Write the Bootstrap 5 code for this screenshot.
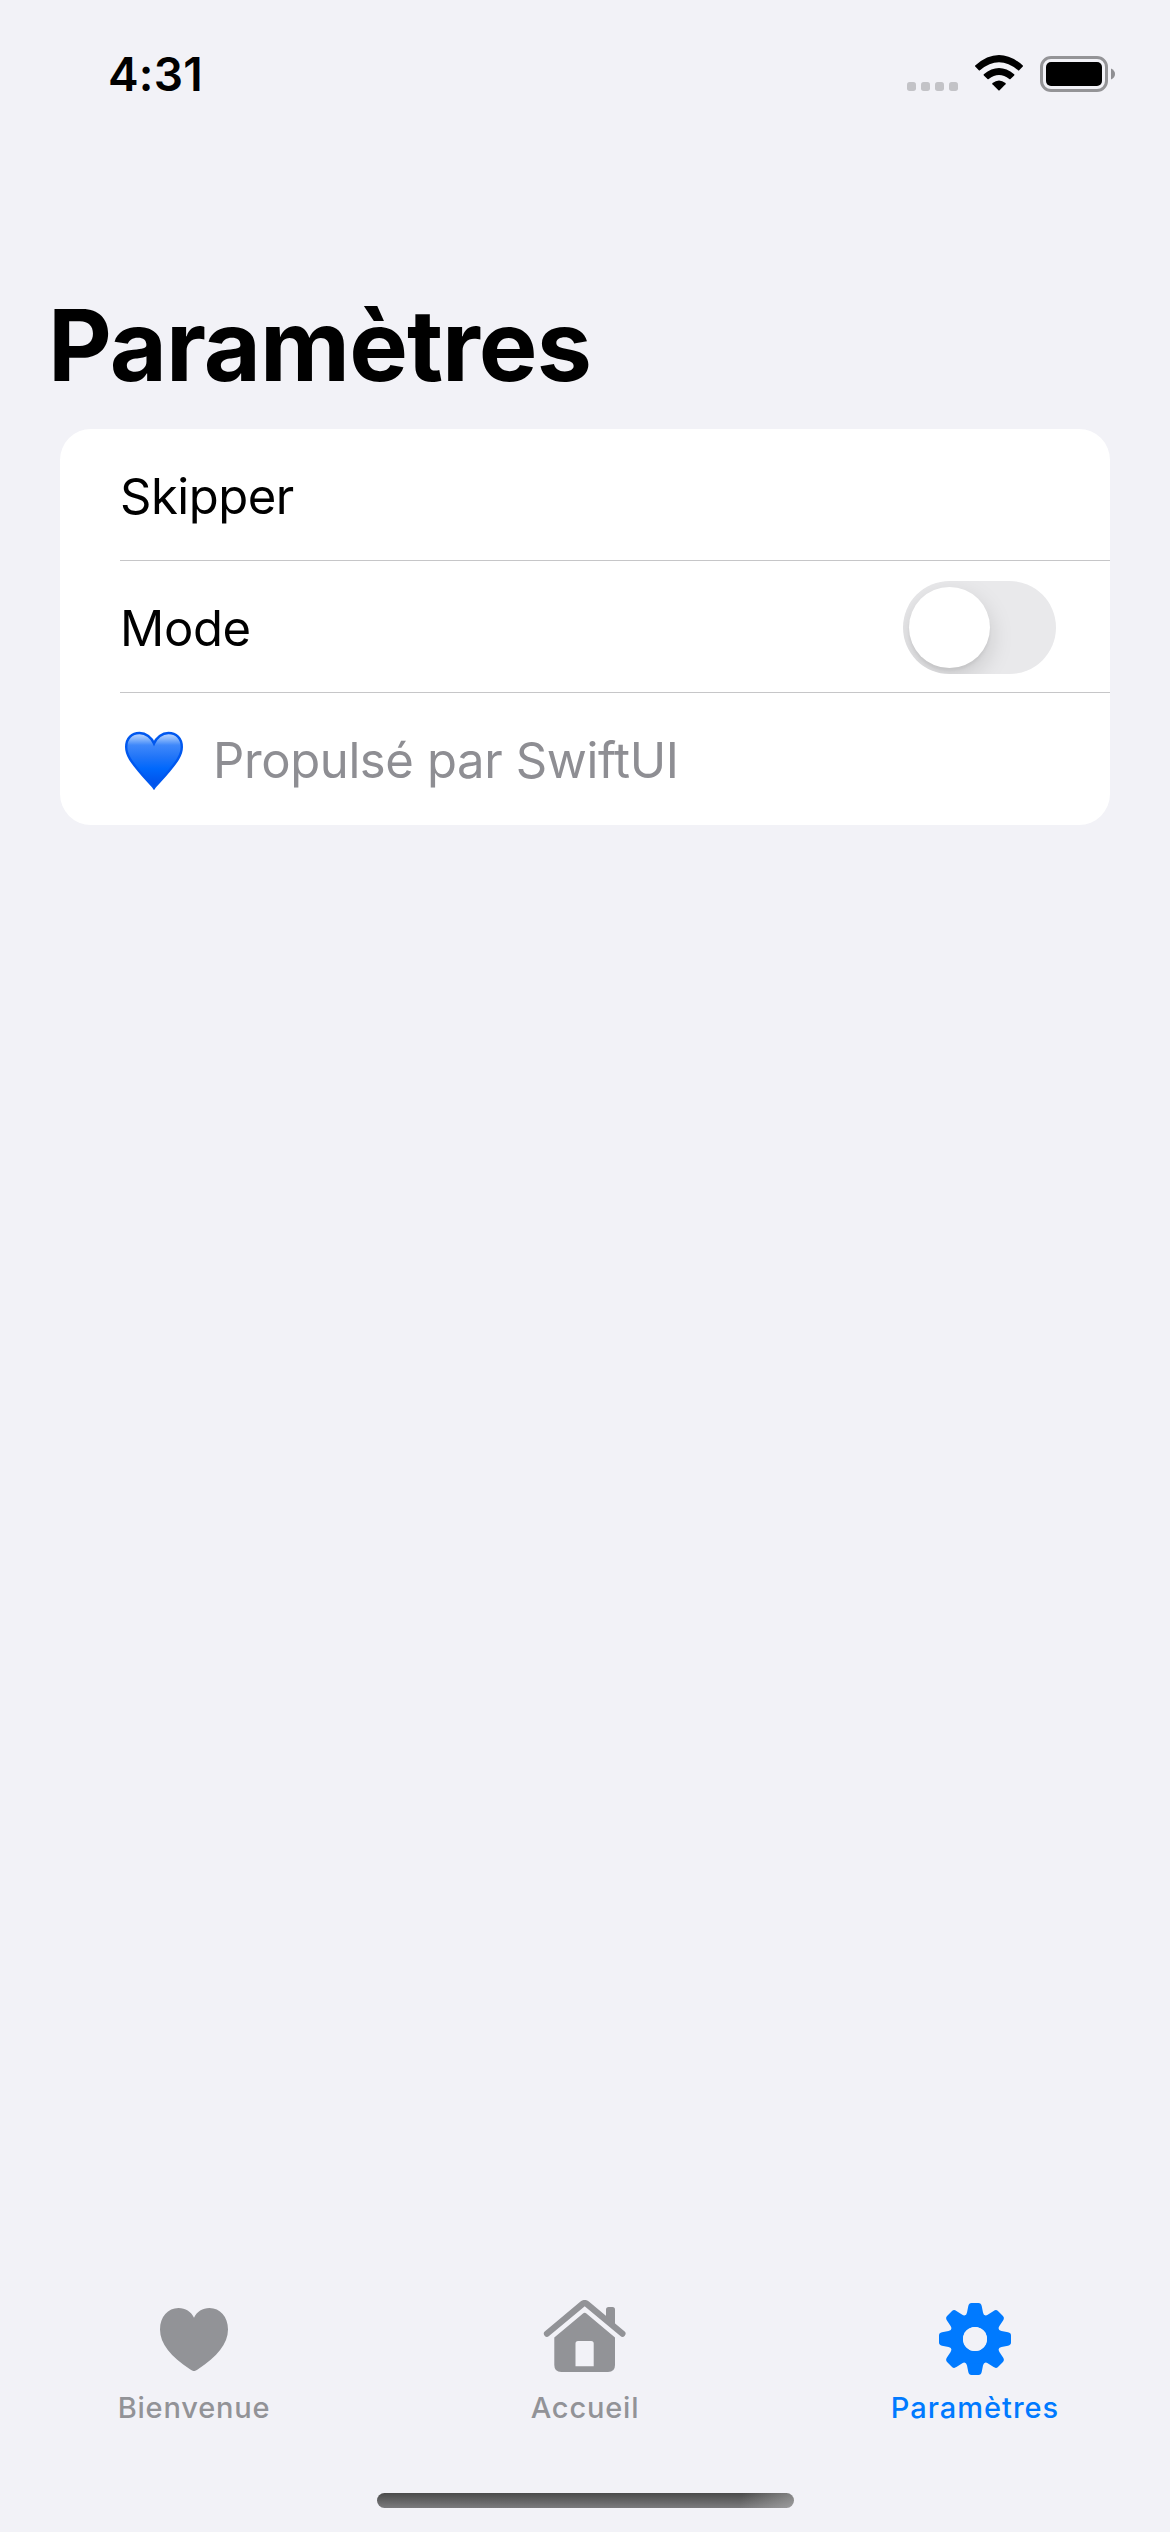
<!DOCTYPE html>
<html lang="fr">
<head>
<meta charset="utf-8">
<meta name="viewport" content="width=device-width, initial-scale=1">
<title>Paramètres</title>
<link href="https://cdn.jsdelivr.net/npm/bootstrap@5.3.0/dist/css/bootstrap.min.css" rel="stylesheet">
<style>
  body { background: #f2f2f7; color: #000; font-family: Inter, "Liberation Sans", sans-serif; }
  svg { display: block; flex: none; }
  .app-screen { height: 2532px; overflow: hidden; }
  .status-bar { height: 148px; padding: 0 54px 0 108px; }
  .status-time { font-size: 46px; font-weight: 600; line-height: 56px; letter-spacing: .2px; }
  .page-title { margin: 137px 0 24px 48px; font-size: 98.6px; font-weight: 700; line-height: 120px; letter-spacing: -.95px; }
  .settings-list { --bs-list-group-border-color: transparent; --bs-list-group-border-width: 0; --bs-list-group-color: #000; margin: 0 60px; border-radius: 31px; background: #fff; overflow: hidden; font-size: 49px; line-height: 60px; }
  .settings-row { height: 132px; margin-left: 60px; padding: 2px 54px 0 0; }
  .settings-row + .settings-row { box-shadow: 0 -1px 0 #c6c6c8; }
  .row-label { padding-top: 2px; letter-spacing: -.38px; }
  .row-label.tight-label { letter-spacing: -.5px; }
  .powered { color: #8e8e93; margin-left: 29px; }
  .mode-switch { width: 153px; height: 93px; margin-bottom: 1px; padding: 6px; border: 0; border-radius: 47px; background: #e9e9eb; overflow: hidden; }
  .switch-knob { display: block; width: 81px; height: 81px; border-radius: 50%; background: #fff; box-shadow: 0 9px 24px rgba(0,0,0,.15), 0 3px 3px rgba(0,0,0,.05); }
  .tab-bar { height: 193px; }
  .tab-link { padding: 0; color: #929397; font-size: 29px; font-weight: 500; line-height: 36px; letter-spacing: .8px; }
  .tab-link.active { color: #007aff; letter-spacing: 1px; }
  .tab-text { margin-top: 14px; }
  .tab-start { margin-left: -1px; margin-right: 1px; }
  .home-bar { width: 417px; height: 15px; margin-bottom: 24px; border-radius: 8px; background: linear-gradient(100deg, transparent 87%, rgba(190,190,190,.5) 100%), linear-gradient(#4b4b4b, #7b7b7d); }
</style>
</head>
<body>
<div class="app-screen d-flex flex-column">
  <header class="status-bar d-flex align-items-center justify-content-between">
    <span class="status-time">4:31</span>
    <svg width="209" height="38" viewBox="0 0 209 38" aria-hidden="true">
      <g fill="#c3c3c7">
        <rect x="0" y="27" width="9" height="9" rx="2.7"/><rect x="14" y="27" width="9" height="9" rx="2.7"/>
        <rect x="28" y="27" width="9" height="9" rx="2.7"/><rect x="42" y="27" width="9" height="9" rx="2.7"/>
      </g>
      <path d="M68.2 10.4Q92-10.4 115.8 10.4Q116.3 11 115.8 11.6L112.2 15.2Q111.6 15.7 111 15.2Q92-.7 73 15.2Q72.4 15.7 71.8 15.2L68.2 11.6Q67.7 11 68.2 10.4Z"/>
      <path d="M76.8 19.3Q92 6.6 107.2 19.3Q107.7 19.9 107.2 20.5L103.5 24.1Q102.9 24.6 102.3 24.1Q92 16 81.7 24.1Q81.1 24.6 80.5 24.1L76.8 20.5Q76.3 19.9 76.8 19.3Z"/>
      <path d="M85.5 28.1Q92 22.9 98.5 28.1Q99.1 28.7 98.5 29.3L92.6 35.2Q92 35.7 91.4 35.2L85.5 29.3Q84.9 28.7 85.5 28.1Z"/>
      <rect x="134.5" y="2.5" width="65" height="33" rx="9.5" fill="none" stroke="#949497" stroke-width="3"/>
      <rect x="139" y="7" width="56" height="24" rx="5"/>
      <path d="M204 13.500Q208 15.500 208 19T204 24.500Z" fill="#8f8f93"/>
    </svg>
  </header>

  <main class="flex-grow-1">
    <h1 class="page-title">Paramètres</h1>
    <div class="list-group settings-list">
      <div class="settings-row d-flex align-items-center"><span class="row-label tight-label">Skipper</span></div>
      <div class="settings-row d-flex align-items-center justify-content-between">
        <span class="row-label">Mode</span>
        <button class="mode-switch" type="button" role="switch" aria-checked="false" aria-label="Mode"><span class="switch-knob"></span></button>
      </div>
      <div class="settings-row d-flex align-items-center">
        <svg width="64" height="64" viewBox="0 0 64 64" aria-hidden="true">
          <defs>
            <linearGradient id="heartFill" x1="0" y1="0" x2="0" y2="1">
              <stop offset="0" stop-color="#c4dcff"/><stop offset=".1" stop-color="#8bb9fc"/><stop offset=".22" stop-color="#3f88fa"/><stop offset=".45" stop-color="#1f74f8"/><stop offset=".65" stop-color="#0068fc"/><stop offset="1" stop-color="#004ce6"/>
            </linearGradient>
          </defs>
          <path d="M34 60C32 57 26 51.500 19 43C11.500 34 6.200 27 6.200 19C6.200 10 12 5 19.500 5C26 5 31.500 9.500 34 15.500C36.500 9.500 42 5 48.500 5C56 5 61.800 10 61.800 19C61.800 27 56.500 34 49 43C42 51.500 36 57 34 60Z" fill="url(#heartFill)" stroke="#0058ef" stroke-width="2.400"/>
        </svg>
        <span class="row-label powered">Propulsé par SwiftUI</span>
      </div>
    </div>
  </main>

  <nav class="tab-bar nav nav-justified flex-nowrap align-items-start">
    <a class="nav-link tab-link d-flex flex-column align-items-center" href="#">
      <svg width="90" height="76" viewBox="0 0 90 76" fill="currentColor" aria-hidden="true">
        <path d="M44 71C43 71 41.500 70.200 40 69.200C21 57 10 43.500 10 29.500C10 16.500 18 8 28.500 8C35.500 8 41 11.500 44 17.700C47 11.500 52.500 8 59.500 8C70 8 78 16.500 78 29.500C78 43.500 67 57 48 69.200C46.500 70.200 45 71 44 71Z"/>
      </svg>
      <span class="tab-text tab-start">Bienvenue</span>
    </a>
    <a class="nav-link tab-link d-flex flex-column align-items-center" href="#">
      <svg width="90" height="76" viewBox="0 0 90 76" fill="currentColor" aria-hidden="true">
        <path d="M7 33.700L42.500 4Q44.700 2.200 46.900 4L82.400 33.700" fill="none" stroke="currentColor" stroke-width="6.200" stroke-linecap="round" stroke-linejoin="round"/>
        <path d="M66 17V9.500Q66 7 68.500 7H72.500Q75 7 75 9.500V25Z"/>
        <path fill-rule="evenodd" d="M14.300 37.500L43 13.500Q44.700 12.100 46.400 13.500L75 37.500V65Q75 72 68 72H21.300Q14.300 72 14.300 65ZM35.500 66.300H53.700V43.500Q53.700 41 51.200 41H38Q35.500 41 35.500 43.500Z"/>
      </svg>
      <span class="tab-text">Accueil</span>
    </a>
    <a class="nav-link tab-link active d-flex flex-column align-items-center" href="#" aria-current="page">
      <svg width="90" height="76" viewBox="-45 -39 90 76" fill="currentColor" aria-hidden="true">
        <defs><path id="tooth" d="M-10.500-23Q-8.300-24.500-8-26.500L-6.700-33Q-6.100-36-3.500-36H3.500Q6.100-36 6.700-33L8-26.500Q8.300-24.500 10.500-23V-15H-10.500Z"/></defs>
        <use href="#tooth"/><use href="#tooth" transform="rotate(45)"/><use href="#tooth" transform="rotate(90)"/><use href="#tooth" transform="rotate(135)"/>
        <use href="#tooth" transform="rotate(180)"/><use href="#tooth" transform="rotate(225)"/><use href="#tooth" transform="rotate(270)"/><use href="#tooth" transform="rotate(315)"/>
        <circle r="18.500" fill="none" stroke="currentColor" stroke-width="13"/>
        <circle r="12" fill="#f2f2f7"/>
      </svg>
      <span class="tab-text">Paramètres</span>
    </a>
  </nav>
  <div class="home-bar align-self-center"></div>
</div>
<script src="https://cdn.jsdelivr.net/npm/bootstrap@5.3.0/dist/js/bootstrap.bundle.min.js"></script>
</body>
</html>
